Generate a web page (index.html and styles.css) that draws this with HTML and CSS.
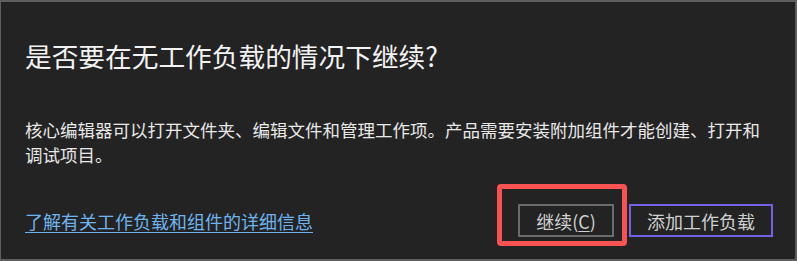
FILE: index.html
```html
<!DOCTYPE html>
<html lang="zh-CN">

<head>
    <meta charset="UTF-8">
    <meta name="viewport" content="width=device-width, initial-scale=1.0">
    <title>继续</title>
    <link rel="stylesheet" href="styles.css">
</head>

<body>
    <!-- 对话框 -->
    <div class="dialog">
        <h1 class="dialog-title">是否要在无工作负载的情况下继续?</h1>
        <p class="dialog-text">核心编辑器可以打开文件夹、编辑文件和管理工作项。产品需要安装附加组件才能创建、打开和调试项目。</p>

        <div class="dialog-footer">
            <a href="#" class="info-link">了解有关工作负载和组件的详细信息</a>
            <div class="actions">
                <div class="highlight">
                    <button class="btn btn-continue">继续(<u>C</u>)</button>
                </div>
                <button class="btn btn-add">添加工作负载</button>
            </div>
        </div>
    </div>
</body>

</html>
```

FILE: styles.css
```css
body,
html {
    margin: 0;
    padding: 0;
    height: 100%;
    background-color: #232323;
    font-family: "Noto Sans CJK SC", "Noto Sans", sans-serif;
}

.dialog {
    box-sizing: border-box;
    height: 261px;
    width: 797px;
    border: 1px solid #5e5e5e;
    border-top-width: 2px;
    border-right-width: 2px;
    border-bottom-width: 2px;
    padding: 37px 22px 0 24px;
    background-color: #232323;
    color: #e8e8e8;
}

.dialog-title {
    margin: 0;
    font-size: 26.7px;
    font-weight: normal;
    line-height: 34px;
    color: #f2f2f2;
}

.dialog-text {
    margin: 45px 0 0 0;
    font-size: 17.5px;
    line-height: 24.5px;
}

.dialog-footer {
    display: flex;
    justify-content: space-between;
    align-items: flex-end;
    margin-top: 17px;
}

.info-link {
    font-size: 18px;
    line-height: 24px;
    margin-bottom: 13px;
    color: #6fb3ee;
    text-decoration: underline;
    text-underline-offset: 3px;
}

.actions {
    display: flex;
    align-items: flex-end;
    gap: 2px;
}

.highlight {
    border: 5px solid #f95252;
    border-radius: 4px;
    padding: 15px 8px 4px 16px;
}

.btn {
    box-sizing: border-box;
    height: 33px;
    padding: 0 16px;
    background-color: transparent;
    color: #d0d0d0;
    font-family: "Noto Sans CJK SC", "Noto Sans", sans-serif;
    font-size: 18px;
    line-height: 1;
    cursor: pointer;
}

.btn-continue {
    min-width: 96px;
    border: 2px solid #6b6b6b;
}

.btn-continue u {
    text-underline-offset: 2px;
}

.btn-add {
    min-width: 142px;
    border: 2px solid #7262e6;
    margin-bottom: 9px;
}
```
